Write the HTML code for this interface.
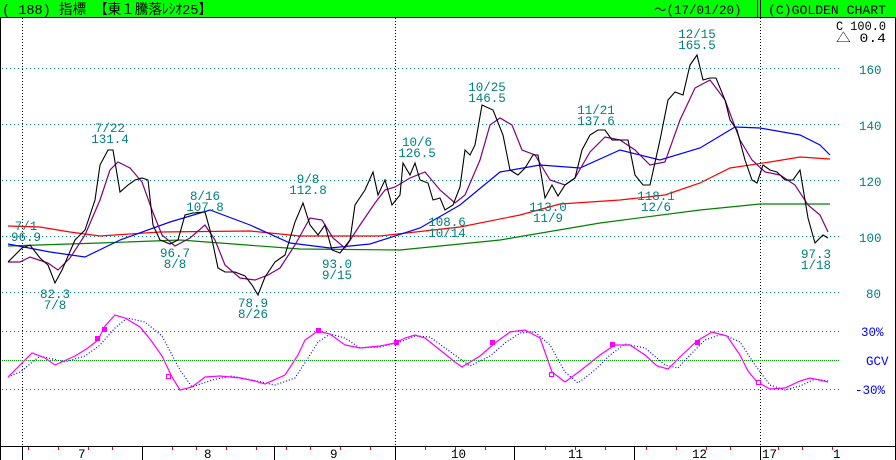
<!DOCTYPE html>
<html><head><meta charset="utf-8"><style>
html,body{margin:0;padding:0;background:#fff;}
svg{display:block}
text{font-family:"Liberation Mono","Noto Sans CJK JP",monospace;font-size:12.5px;}
</style></head><body>
<svg width="896" height="460" viewBox="0 0 896 460" xmlns="http://www.w3.org/2000/svg">
<rect x="0" y="0" width="896" height="460" fill="#fff"/>
<rect x="0" y="0" width="896" height="17" fill="#00ff00"/>
<line x1="0" y1="17.5" x2="896" y2="17.5" stroke="#000"/>
<text x="2" y="14" fill="#000" textLength="210" lengthAdjust="spacingAndGlyphs" style="font-size:14px">( 188) 指標 【東１騰落ﾚｼｵ25】</text>
<text x="654" y="14" fill="#000">～(17/01/20)</text>
<line x1="757.5" y1="0" x2="757.5" y2="17" stroke="#000"/>
<line x1="760.5" y1="0" x2="760.5" y2="17" stroke="#000"/>
<text x="768" y="14" fill="#000" textLength="118" lengthAdjust="spacingAndGlyphs">(C)GOLDEN CHART</text>
<line x1="0.5" y1="17" x2="0.5" y2="460" stroke="#000"/>
<line x1="895.5" y1="17" x2="895.5" y2="460" stroke="#000"/>
<g stroke="#000" stroke-dasharray="1,2">
<line x1="22.5" y1="18" x2="22.5" y2="446"/>
<line x1="395.5" y1="18" x2="395.5" y2="446"/>
<line x1="760.5" y1="18" x2="760.5" y2="446"/>
</g>
<g stroke="#008080" stroke-dasharray="1,3">
<line x1="2" y1="68.5" x2="840" y2="68.5"/>
<line x1="2" y1="124.5" x2="840" y2="124.5"/>
<line x1="2" y1="180.5" x2="840" y2="180.5"/>
<line x1="2" y1="236.5" x2="840" y2="236.5"/>
<line x1="2" y1="292.5" x2="840" y2="292.5"/>
</g>
<g fill="#008080">
<text x="859" y="74">160</text><text x="859" y="130">140</text><text x="859" y="186">120</text><text x="859" y="242">100</text><text x="866" y="298">80</text>
</g>
<text x="836" y="30" fill="#000" textLength="50" lengthAdjust="spacingAndGlyphs">C 100.0</text>
<text x="836" y="42" fill="#000" textLength="50" lengthAdjust="spacingAndGlyphs">△  0.4</text>
<g stroke="#008000" stroke-dasharray="1,3">
<line x1="2" y1="331.5" x2="840" y2="331.5"/>
<line x1="2" y1="389.5" x2="840" y2="389.5"/>
</g>
<line x1="2" y1="360.5" x2="840" y2="360.5" stroke="#00a000" stroke-dasharray="1,1"/>
<g fill="#0000ff">
<text x="861" y="336">30%</text><text x="866" y="365">GCV</text><text x="855" y="394">-30%</text>
</g>
<polyline fill="none" stroke="#008000" stroke-width="1.2" points="8,246 100,243 180,240 300,249 400,250 500,240 600,223 700,210 760,204 830,204"/>
<polyline fill="none" stroke="#ff0000" stroke-width="1.2" points="8,226 40,227 70,232 100,236 160,232 250,231 300,236 380,236 460,227 520,215 560,204 620,200 665,195 700,183 730,168 770,162 800,157 830,159"/>
<polyline fill="none" stroke="#0000ff" stroke-width="1.2" points="8,244 50,252 85,257 120,240 170,222 210,210 250,225 290,243 330,248 370,244 420,228 460,205 500,172 540,165 580,168 620,150 660,160 700,148 735,127 760,128 800,135 820,145 830,155"/>
<polyline fill="none" stroke="#800080" stroke-width="1.2" points="8,262 20,262 30,257 48,263 58,270 70,258 85,235 100,200 110,170 118,162 130,168 142,182 152,210 162,235 175,246 190,238 205,225 215,240 225,265 240,278 255,280 268,275 280,268 295,245 310,218 322,220 333,238 345,248 360,225 375,203 385,190 395,187 410,178 425,172 440,190 455,203 465,195 480,160 490,125 500,118 512,125 522,150 535,155 550,180 565,185 575,178 590,152 605,137 620,140 635,150 650,165 665,162 680,120 695,88 710,80 725,100 740,140 752,160 765,172 780,175 795,185 808,205 820,215 828,232"/>
<polyline fill="none" stroke="#000" stroke-width="1.1" points="8,262 22,248 30,245 40,258 48,265 55,283 62,270 75,240 85,230 95,200 100,165 108,150 113,150 120,192 128,185 135,180 142,178 148,180 153,225 160,240 170,244 178,240 185,215 193,213 205,212 210,230 218,268 225,272 235,272 245,276 252,285 258,295 265,277 275,262 285,255 295,222 303,203 310,225 318,235 325,225 332,250 340,253 350,240 355,205 365,190 373,172 378,195 385,180 392,205 400,195 403,163 410,175 415,163 420,180 428,183 433,200 440,198 445,210 453,205 460,187 465,150 470,155 475,145 482,105 493,110 503,135 510,170 518,175 525,168 533,155 538,155 545,198 552,185 558,196 565,185 575,178 582,150 590,135 598,130 605,130 612,140 620,140 628,140 635,175 643,185 650,185 660,140 668,100 675,92 683,95 690,65 697,55 703,80 710,78 716,78 725,100 730,120 737,130 745,160 752,180 757,183 763,165 770,170 777,172 785,180 793,180 800,170 808,218 815,243 823,235 828,238"/>
<g fill="#008080" text-anchor="middle">
<text x="26" y="230">7/1</text><text x="26" y="241">96.9</text>
<text x="55" y="298">82.3</text><text x="55" y="309">7/8</text>
<text x="110" y="132">7/22</text><text x="110" y="143">131.4</text>
<text x="175" y="257">96.7</text><text x="175" y="268">8/8</text>
<text x="205" y="200">8/16</text><text x="205" y="211">107.8</text>
<text x="253" y="307">78.9</text><text x="253" y="318">8/26</text>
<text x="308" y="183">9/8</text><text x="308" y="194">112.8</text>
<text x="337" y="268">93.0</text><text x="337" y="279">9/15</text>
<text x="417" y="146">10/6</text><text x="417" y="157">126.5</text>
<text x="487" y="91">10/25</text><text x="487" y="102">146.5</text>
<text x="447" y="226">108.6</text><text x="447" y="237">10/14</text>
<text x="548" y="211">113.0</text><text x="548" y="222">11/9</text>
<text x="596" y="114">11/21</text><text x="596" y="125">137.6</text>
<text x="656" y="200">118.1</text><text x="656" y="211">12/6</text>
<text x="697" y="38">12/15</text><text x="697" y="49">165.5</text>
<text x="816" y="258">97.3</text><text x="816" y="269">1/18</text>
</g>
<polyline fill="none" stroke="#0000ff" stroke-dasharray="1,2" stroke-width="1.2" points="8,377 20,372 40,356 65,362 85,356 100,345 115,328 127,318 145,322 162,336 180,370 192,387 212,380 232,376 252,380 275,385 295,378 310,355 318,342 330,334 345,338 360,348 380,347 400,342 415,336 430,337 445,348 470,366 490,356 505,343 520,333 535,332 550,345 565,372 578,383 595,370 610,355 625,344 645,348 665,365 678,368 690,355 705,340 722,334 740,342 755,365 770,385 785,390 800,386 815,379 828,381"/>
<polyline fill="none" stroke="#ff00ff" stroke-width="1.2" points="8,377 20,365 32,353 45,358 55,365 75,356 88,348 98,340 105,326 115,315 125,318 140,327 150,339 162,356 172,377 180,390 192,387 205,377 220,376 240,378 255,381 265,384 285,375 298,355 305,340 318,331 330,334 345,345 360,348 380,346 395,343 405,338 415,335 425,338 440,350 455,362 462,367 480,356 495,343 510,332 525,330 540,338 552,372 565,382 580,371 600,355 615,345 630,345 645,355 657,366 668,369 680,357 697,341 712,332 727,336 740,355 748,371 757,382 770,389 785,388 800,381 810,378 828,382"/>
<g fill="#ff00ff">
<rect x="95" y="336" width="5" height="5"/><rect x="102" y="327" width="5" height="5"/>
<rect x="316" y="328" width="5" height="5"/><rect x="394" y="340" width="5" height="5"/>
<rect x="490" y="340" width="5" height="5"/><rect x="610" y="342" width="5" height="5"/>
<rect x="695" y="340" width="5" height="5"/>
</g>
<g fill="#fff" stroke="#ff00ff">
<rect x="166.5" y="374.5" width="4" height="4"/><rect x="549.5" y="372.5" width="4" height="4"/><rect x="756.5" y="380.5" width="4" height="4"/>
</g>
<line x1="0" y1="446.5" x2="896" y2="446.5" stroke="#000"/>
<g stroke="#000">
<line x1="22.5" y1="446" x2="22.5" y2="460"/><line x1="142.5" y1="446" x2="142.5" y2="460"/>
<line x1="274.5" y1="446" x2="274.5" y2="460"/><line x1="395.5" y1="446" x2="395.5" y2="460"/>
<line x1="514.5" y1="446" x2="514.5" y2="460"/><line x1="634.5" y1="446" x2="634.5" y2="460"/>
<line x1="760.5" y1="446" x2="760.5" y2="460"/>
</g>
<g stroke="#ff0000">
<line x1="28.5" y1="447" x2="28.5" y2="450"/><line x1="58.5" y1="447" x2="58.5" y2="450"/><line x1="88.5" y1="447" x2="88.5" y2="450"/><line x1="112.5" y1="447" x2="112.5" y2="450"/>
<line x1="172.5" y1="447" x2="172.5" y2="450"/><line x1="196.5" y1="447" x2="196.5" y2="450"/><line x1="226.5" y1="447" x2="226.5" y2="450"/><line x1="256.5" y1="447" x2="256.5" y2="450"/><line x1="286.5" y1="447" x2="286.5" y2="450"/>
<line x1="310.5" y1="447" x2="310.5" y2="450"/><line x1="340.5" y1="447" x2="340.5" y2="450"/><line x1="370.5" y1="447" x2="370.5" y2="450"/>
<line x1="425.5" y1="447" x2="425.5" y2="450"/><line x1="455.5" y1="447" x2="455.5" y2="450"/><line x1="485.5" y1="447" x2="485.5" y2="450"/>
<line x1="545.5" y1="447" x2="545.5" y2="450"/><line x1="575.5" y1="447" x2="575.5" y2="450"/><line x1="605.5" y1="447" x2="605.5" y2="450"/>
<line x1="646.5" y1="447" x2="646.5" y2="450"/><line x1="676.5" y1="447" x2="676.5" y2="450"/><line x1="706.5" y1="447" x2="706.5" y2="450"/><line x1="730.5" y1="447" x2="730.5" y2="450"/>
<line x1="778.5" y1="447" x2="778.5" y2="450"/><line x1="802.5" y1="447" x2="802.5" y2="450"/><line x1="832.5" y1="447" x2="832.5" y2="450"/>
</g>
<g fill="#000">
<text x="78" y="458">7</text><text x="204" y="458">8</text><text x="330" y="458">9</text><text x="451" y="458">10</text>
<text x="568" y="458">11</text><text x="692" y="458">12</text><text x="762" y="458">17</text><text x="833" y="458">1</text>
</g>
</svg>
</body></html>
